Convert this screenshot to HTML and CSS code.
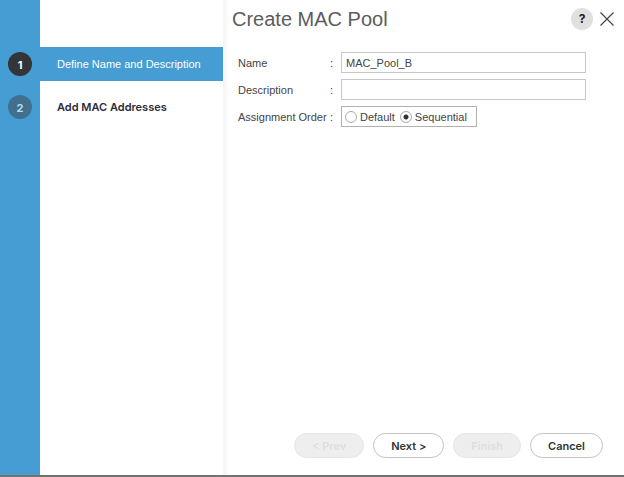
FILE: index.html
```html
<!DOCTYPE html>
<html lang="en">
<head>
<meta charset="utf-8">
<meta name="viewport" content="width=device-width, initial-scale=1">
<title>Create MAC Pool</title>
<link rel="stylesheet" href="styles.css">
</head>
<body>
<main class="wizard">
  <nav class="steps">
    <ol class="step-list">
      <li class="step step-active" aria-current="step"><span class="step-number">1</span><span class="step-label">Define Name and Description</span></li>
      <li class="step"><span class="step-number">2</span><span class="step-label">Add MAC Addresses</span></li>
    </ol>
  </nav>
  <form class="panel">
    <header class="panel-header">
      <h1 class="title">Create MAC Pool</h1>
      <button class="icon-button help" type="button" aria-label="Help">?</button>
      <button class="icon-button close" type="button" aria-label="Close">
        <svg class="close-icon" viewBox="0 0 14 14" aria-hidden="true"><path d="M0.5 0.5 13.5 13.5M13.5 0.5 0.5 13.5"/></svg>
      </button>
    </header>
    <div class="fields">
      <div class="field">
        <label class="field-label" for="pool-name">Name</label><span class="colon">:</span>
        <input class="text-input" id="pool-name" type="text" value="MAC_Pool_B">
      </div>
      <div class="field">
        <label class="field-label" for="pool-description">Description</label><span class="colon">:</span>
        <input class="text-input" id="pool-description" type="text">
      </div>
      <div class="field" role="radiogroup" aria-labelledby="order-label">
        <span class="field-label" id="order-label">Assignment Order</span><span class="colon">:</span>
        <div class="radio-box">
          <label class="radio-option"><input class="radio" type="radio" name="order">Default</label>
          <label class="radio-option"><input class="radio" type="radio" name="order" checked>Sequential</label>
        </div>
      </div>
    </div>
    <footer class="actions">
      <button class="action" type="button" disabled>&lt; Prev</button>
      <button class="action" type="button">Next &gt;</button>
      <button class="action" type="button" disabled>Finish</button>
      <button class="action" type="button">Cancel</button>
    </footer>
  </form>
</main>
</body>
</html>
```
FILE: styles.css
```css
* {
  box-sizing: border-box;
}

body {
  margin: 0;
  font-family: "Liberation Sans", Arial, sans-serif;
  font-size: 11px;
  line-height: 16px;
  color: #444;
  background: #fff;
}

button,
input {
  font: inherit;
  color: inherit;
  margin: 0;
}

.wizard {
  display: grid;
  grid-template-columns: 223px 1fr;
  min-height: 100vh;
  border-bottom: 2px solid #727272;
}

.steps {
  padding-top: 47px;
  background: linear-gradient(to right, #459dd3 40px, #fff 40px);
}

.step-list {
  display: grid;
  gap: 9px;
  margin: 0;
  padding: 0;
  list-style: none;
}

.step {
  display: grid;
  grid-template-columns: 24px 1fr;
  gap: 25px;
  align-items: center;
  height: 34px;
  padding-left: 8px;
  font-family: Inter, "Liberation Sans", sans-serif;
  font-weight: 600;
  color: #2c2c38;
}

.step-active {
  font-family: "Liberation Sans", Arial, sans-serif;
  font-weight: 400;
  color: #fff;
  background: #459dd3;
}

.step-number {
  height: 24px;
  border-radius: 50%;
  font-family: Inter, "Liberation Sans", sans-serif;
  font-weight: 700;
  line-height: 26px;
  text-align: center;
  color: #b7ddf4;
  background: #416f8e;
}

.step-active .step-number {
  color: #fff;
  background: #333539;
}

.panel {
  display: flex;
  flex-direction: column;
  padding: 6px 10px 17px 9px;
  background: linear-gradient(to right, #f4f4f4, #fff 6px);
}

.panel-header {
  display: flex;
  align-items: center;
  gap: 7px;
  height: 26px;
}

.title {
  flex: 1;
  margin: 0;
  font-size: 20px;
  font-weight: 400;
  line-height: 26px;
  color: #5c5c5c;
}

.icon-button {
  padding: 0;
  border: 0;
  background: none;
}

.help {
  width: 22px;
  height: 22px;
  border-radius: 50%;
  font-family: Inter, "Liberation Sans", sans-serif;
  font-size: 12px;
  font-weight: 700;
  color: #222;
  background: #e0e0e0;
}

.close {
  display: flex;
}

.close-icon {
  width: 14px;
  height: 14px;
  fill: none;
  stroke: #444;
  stroke-width: 1.2;
}

.fields {
  display: grid;
  gap: 6px;
  padding: 20px 28px 0 6px;
}

.field {
  display: grid;
  grid-template-columns: 92px 11px 1fr;
  align-items: center;
}

.field-label {
  white-space: nowrap;
}

.text-input {
  width: 100%;
  height: 21px;
  padding: 0 4px;
  border: 1px solid #c8c8c8;
  border-radius: 0;
  background: #fff;
}

.radio-box {
  display: flex;
  gap: 5px;
  justify-self: start;
  height: 21px;
  padding: 0 9px 0 3px;
  border: 1px solid #b0b0b0;
}

.radio-option {
  display: flex;
  align-items: center;
  gap: 3px;
}

.radio {
  appearance: none;
  width: 12px;
  height: 12px;
  border: 1px solid #aaa;
  border-radius: 50%;
  background: #fff;
}

.radio:checked {
  background: radial-gradient(circle, #333 2px, #fff 3px);
}

.actions {
  display: flex;
  justify-content: flex-end;
  gap: 9px;
  margin-top: auto;
  padding-right: 11px;
}

.action {
  height: 25px;
  padding: 0 17px;
  border: 1px solid #c4c4c4;
  border-radius: 13px;
  font-family: Inter, "Liberation Sans", sans-serif;
  font-weight: 600;
  color: #333;
  background: #fff;
}

.action:disabled {
  color: #dedede;
  background: #eee;
  border-color: #e6e6e6;
}
```
